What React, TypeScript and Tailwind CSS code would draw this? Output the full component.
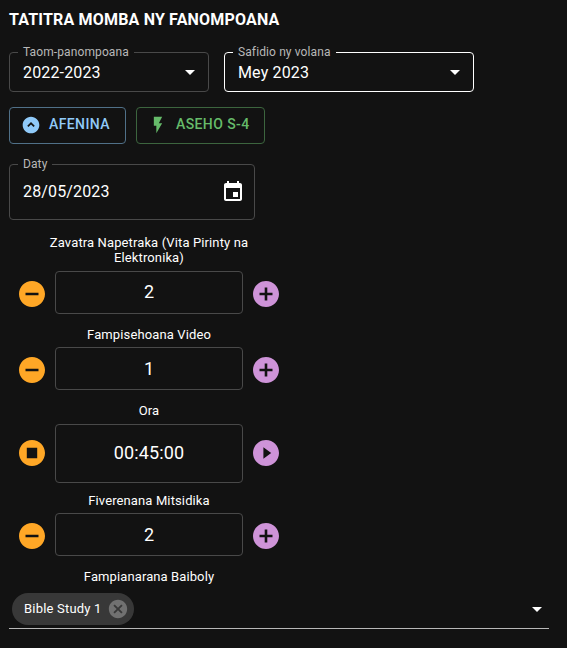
import type { ReactNode } from "react";

const paths = {
  caret: "M7 10l5 5 5-5z",
  collapse:
    "M12 2C6.48 2 2 6.48 2 12s4.48 10 10 10 10-4.48 10-10S17.52 2 12 2zm3.08 12.41L12 11.33l-3.08 3.08L7.5 13 12 8.5l4.5 4.5z",
  bolt: "M7 2v11h3v9l7-12h-4l4-8z",
  calendar:
    "M17 12h-5v5h5v-5zM16 1v2H8V1H6v2H5c-1.11 0-1.99.9-1.99 2L3 19c0 1.1.89 2 2 2h14c1.1 0 2-.9 2-2V5c0-1.1-.9-2-2-2h-1V1h-2zm3 18H5V8h14v11z",
  minus: "M12 2C6.48 2 2 6.48 2 12s4.48 10 10 10 10-4.48 10-10S17.52 2 12 2zm5 11H7v-2h10v2z",
  plus: "M12 2C6.48 2 2 6.48 2 12s4.48 10 10 10 10-4.48 10-10S17.52 2 12 2zm5 11h-4v4h-2v-4H7v-2h4V7h2v4h4v2z",
  stop: "M12 2C6.48 2 2 6.48 2 12s4.48 10 10 10 10-4.48 10-10S17.52 2 12 2zm4 14H8V8h8v8z",
  play: "M12 2C6.48 2 2 6.48 2 12s4.48 10 10 10 10-4.48 10-10S17.52 2 12 2zm-2 14.5v-9l6 4.5z",
  cancel:
    "M12 2C6.47 2 2 6.47 2 12s4.47 10 10 10 10-4.47 10-10S17.53 2 12 2zm5 13.59L15.59 17 12 13.41 8.41 17 7 15.59 10.59 12 7 8.41 8.41 7 12 10.59 15.59 7 17 8.41 13.41 12 17 15.59z",
};

function Icon({
  name,
  className,
  viewBox = "0 0 24 24",
}: {
  name: keyof typeof paths;
  className: string;
  viewBox?: string;
}) {
  return (
    <svg viewBox={viewBox} fill="currentColor" className={`shrink-0 ${className}`}>
      <path d={paths[name]} />
    </svg>
  );
}

function Field({ label, className, children }: { label: string; className: string; children: ReactNode }) {
  return (
    <fieldset className={`min-w-0 rounded border pl-2 ${className}`}>
      <legend className="px-[5px] text-[12px] leading-[11px] tracking-[0.11px] text-[#b8b8b8]">{label}</legend>
      {children}
    </fieldset>
  );
}

function Counter({
  label,
  value,
  className = "",
  box = "h-[43px] pb-px",
  timer = false,
}: {
  label: string;
  value: string;
  className?: string;
  box?: string;
  timer?: boolean;
}) {
  const shift = timer ? "mb-px" : "mt-[3px]";
  return (
    <div className={`flex w-[260px] flex-col items-center ${className}`}>
      <div className="w-[220px] text-center text-[13px] leading-[15px] tracking-[0.12px]">{label}</div>
      <div className={`flex w-full items-center justify-between ${timer ? "mt-[6px]" : "mt-[5px]"}`}>
        <Icon name={timer ? "stop" : "minus"} viewBox="2 2 20 20" className={`size-[26px] text-[#ffa726] ${shift}`} />
        <div
          className={`flex w-[188px] items-center justify-center rounded border border-[#494949] text-[18px] tracking-[0.12px] ${box}`}
        >
          {value}
        </div>
        <Icon name={timer ? "play" : "plus"} viewBox="2 2 20 20" className={`size-[26px] text-[#ce93d8] ${shift}`} />
      </div>
    </div>
  );
}

export default function App() {
  return (
    <main className="h-[648px] w-[567px] overflow-hidden bg-[#121212] pl-[9px] font-['Roboto',sans-serif] text-white">
      <h1 className="pt-[9px] text-[16px] leading-[21px] font-bold tracking-[0.18px]">TATITRA MOMBA NY FANOMPOANA</h1>

      <div className="mt-[17px] flex gap-[15px]">
        <Field label="Taom-panompoana" className="h-[45px] w-[200px] border-[#494949]">
          <div className="flex h-[28px] items-center justify-between pr-[6px] pl-[5px] text-[16px] tracking-[0.15px]">
            <span className="pt-0.5">2022-2023</span>
            <Icon name="caret" className="size-6" />
          </div>
        </Field>
        <Field label="Safidio ny volana" className="h-[45px] w-[250px] border-white">
          <div className="flex h-[28px] items-center justify-between pr-[6px] pl-[5px] text-[16px] tracking-[0.15px]">
            <span className="pt-0.5">Mey 2023</span>
            <Icon name="caret" className="size-6" />
          </div>
        </Field>
      </div>

      <div className="mt-[15px] flex gap-[10px] text-[14px] font-medium tracking-[0.4px]">
        <button className="flex h-[37px] w-[117px] items-center gap-2 rounded border border-[#507088] pl-[11px] text-[#90caf9]">
          <Icon name="collapse" className="mb-px size-5" />
          <span className="pb-0.5">AFENINA</span>
        </button>
        <button className="flex h-[37px] w-[129px] items-center gap-2 rounded border border-[#3c653e] pl-[11px] text-[#66bb6a]">
          <Icon name="bolt" className="mb-px size-5" />
          <span className="pb-0.5">ASEHO S-4</span>
        </button>
      </div>

      <Field label="Daty" className="mt-[15px] h-[61px] w-[246px] border-[#494949]">
        <div className="flex h-[43px] items-center justify-between pr-[9px] pl-[5px] text-[16px] tracking-[0.15px]">
          28/05/2023
          <Icon name="calendar" className="size-6" />
        </div>
      </Field>

      <div className="mt-[15px] ml-[10px]">
        <div className="h-[79px]">
          <Counter label="Zavatra Napetraka (Vita Pirinty na Elektronika)" value="2" box="mt-px h-[43px] pb-0.5" />
        </div>
        <Counter label="Fampisehoana Video" value="1" className="mt-[13px]" />
        <Counter label="Ora" value="00:45:00" className="mt-[13px]" box="h-[59px] pb-0.5" timer />
        <Counter label="Fiverenana Mitsidika" value="2" className="mt-[10px]" />
        <div className="mt-[13px] w-[260px] text-center text-[13px] leading-[15px] tracking-[0.1px]">
          Fampianarana Baiboly
        </div>
      </div>

      <div className="mt-[9px] flex h-9 w-[540px] items-start justify-between border-b border-[#b8b8b8] pl-[3px]">
        <div className="flex h-8 w-[122px] items-center justify-between rounded-full bg-[#383838] pr-[5px] pl-3 text-[13px] tracking-[0.2px]">
          Bible Study 1
          <Icon name="cancel" className="size-[22px] text-[#717171]" />
        </div>
        <Icon name="caret" className="mt-[4px] size-6" />
      </div>
    </main>
  );
}
